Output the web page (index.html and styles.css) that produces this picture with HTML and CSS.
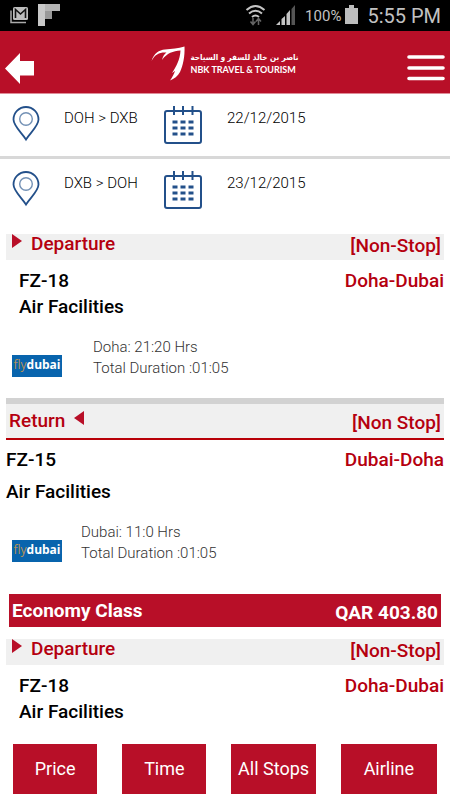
FILE: index.html
```html
<!DOCTYPE html>
<html lang="en">
<head>
<meta charset="utf-8">
<meta name="viewport" content="width=device-width, initial-scale=1">
<title>NBK Travel &amp; Tourism</title>
<link rel="stylesheet" href="styles.css">
</head>
<body>
<svg class="defs" aria-hidden="true">
  <symbol id="pin" viewBox="0 0 28 36">
    <path d="M14 33.5C10 27 1.500 20 1.500 13.500A12.500 12.500 0 0 1 26.500 13.500C26.500 20 18 27 14 33.500Z" fill="none" stroke="#23508a" stroke-width="1.800"/>
    <circle cx="14" cy="13" r="6.300" fill="none" stroke="#7391b5" stroke-width="1.400"/>
  </symbol>
  <symbol id="calendar" viewBox="0 0 38 38">
    <rect x="1" y="5" width="36" height="32" rx="2" fill="none" stroke="#23508a" stroke-width="2"/>
    <path d="M10 0v9M19 0v9M28.500 0v9" stroke="#23508a" stroke-width="2"/>
    <path d="M8.500 16h5M16.500 16h5M24.500 16h5M8.500 22h5M16.500 22h5M24.500 22h5M8.500 28h5M16.500 28h5M24.500 28h5" stroke="#23508a" stroke-width="3"/>
  </symbol>
</svg>

<div class="status">
  <svg width="60" height="31" viewBox="0 0 60 31" aria-hidden="true">
    <path d="M11 10.500V22.500H26" fill="none" stroke="#aaa" stroke-width="1.500"/>
    <rect x="13" y="7" width="15" height="13" rx="1.500" fill="#bdbdbd"/>
    <path d="M15.500 18V9.500L20.500 14L25.500 9.500V18" fill="none" stroke="#111" stroke-width="1.600"/>
    <path d="M38 4h7v22h-7z" fill="#c8c8c8"/>
    <path d="M45 4h15v7H45z" fill="#b4b4b4"/>
    <path d="M45 11h7v8h-7z" fill="#999"/>
  </svg>
  <div class="status-right">
    <svg width="54" height="31" viewBox="0 0 54 31" aria-hidden="true">
      <g fill="none" stroke="#c4c4c4" stroke-width="2">
        <path d="M1.500 10Q10.500 2 19.500 10"/>
        <path d="M4 13.500Q10.500 8 17 13.500"/>
        <path d="M7 17Q10.500 14 14 17"/>
      </g>
      <path d="M8 18v6M5.500 21.500L8 24.500L10.500 21.500M13.500 25v-6M11 21.500L13.500 18.500L16 21.500" fill="none" stroke="#666" stroke-width="1.500"/>
      <path d="M31 25L35 21V25ZM36.500 25V19L40 16V25ZM41.500 25V14L45 10V25Z" fill="#c4c4c4"/>
      <path d="M46.500 25V9L50 5V25Z" fill="#555"/>
    </svg>
    <span class="battery-text">100%</span>
    <svg width="13" height="31" viewBox="0 0 13 31" aria-hidden="true"><path d="M4 5h5v3h4v16H0V8h4z" fill="#bdbdbd"/></svg>
    <span class="clock">5:55 PM</span>
  </div>
</div>

<header class="header">
  <button class="icon-button" type="button" aria-label="Back">
    <svg width="29" height="31" viewBox="0 0 29 31"><path d="M0 15.500L15 0V8H29V22.500H15V31Z" fill="#fff"/></svg>
  </button>
  <div class="brand">
    <svg width="34" height="36" viewBox="0 0 34 36" aria-hidden="true">
      <path d="M0.500 15C3 7 8 4 14 3.500C21 3 27 2.500 33.500 0.500C34 10 32 20 29 26C27 30 23 33 19 34.500C21.500 31 23 28 24 25L21 27C25 21 29 14 29.500 4.500C22 5 16 7 11 14C12 10 13.500 8 15.500 6.500C9 6 4 8 0.500 15Z" fill="#fff"/>
    </svg>
    <div class="brand-text">
      <span class="brand-ar" lang="ar" dir="rtl">ناصر بن خالد للسفر و السياحة</span>
      <span class="brand-en">NBK TRAVEL &amp; TOURISM</span>
    </div>
  </div>
  <button class="icon-button" type="button" aria-label="Menu">
    <svg width="38" height="26" viewBox="0 0 38 26"><path d="M2 2H36M2 13H36M2 23.500H36" stroke="#fff" stroke-width="3.600" stroke-linecap="round"/></svg>
  </button>
</header>

<main>
  <section class="legs">
    <div class="leg">
      <svg width="28" height="36" aria-hidden="true"><use href="#pin"/></svg>
      <span class="route">DOH &gt; DXB</span>
      <svg width="38" height="38" aria-hidden="true"><use href="#calendar"/></svg>
      <span>22/12/2015</span>
    </div>
    <div class="leg">
      <svg width="28" height="36" aria-hidden="true"><use href="#pin"/></svg>
      <span class="route">DXB &gt; DOH</span>
      <svg width="38" height="38" aria-hidden="true"><use href="#calendar"/></svg>
      <span>23/12/2015</span>
    </div>
  </section>

  <section class="flight">
    <h2 class="bar"><svg width="10" height="14" viewBox="0 0 10 14" aria-hidden="true"><path d="M0 0L10 7L0 14Z" fill="#b80f28"/></svg>Departure<span class="stops">[Non-Stop]</span></h2>
    <div class="info">
      <div class="line"><span>FZ-18</span><span class="city">Doha-Dubai</span></div>
      <div class="line"><span>Air Facilities</span></div>
    </div>
    <div class="times">
      <div class="airline"><i>fly</i>dubai</div>
      <p>Doha: 21:20 Hrs<br>Total Duration :01:05</p>
    </div>
  </section>

  <section class="flight return">
    <h2 class="bar">Return<svg width="10" height="14" viewBox="0 0 10 14" aria-hidden="true"><path d="M10 0L0 7L10 14Z" fill="#b80f28"/></svg><span class="stops">[Non Stop]</span></h2>
    <div class="info">
      <div class="line"><span>FZ-15</span><span class="city">Dubai-Doha</span></div>
      <div class="line"><span>Air Facilities</span></div>
    </div>
    <div class="times">
      <div class="airline"><i>fly</i>dubai</div>
      <p>Dubai: 11:0 Hrs<br>Total Duration :01:05</p>
    </div>
  </section>

  <div class="fare"><span>Economy Class</span><span class="price">QAR 403.80</span></div>

  <section class="flight">
    <h2 class="bar"><svg width="10" height="14" viewBox="0 0 10 14" aria-hidden="true"><path d="M0 0L10 7L0 14Z" fill="#b80f28"/></svg>Departure<span class="stops">[Non-Stop]</span></h2>
    <div class="info">
      <div class="line"><span>FZ-18</span><span class="city">Doha-Dubai</span></div>
      <div class="line"><span>Air Facilities</span></div>
    </div>
  </section>
</main>

<nav class="filters" aria-label="Sort and filter">
  <button type="button">Price</button>
  <button type="button">Time</button>
  <button type="button">All Stops</button>
  <button type="button">Airline</button>
</nav>
</body>
</html>
```
FILE: styles.css
```css
* {
  box-sizing: border-box;
}

body {
  margin: 0;
  background: #fff;
  color: #000;
  font: 15px/20px Roboto, sans-serif;
}

button {
  padding: 0;
  border: 0;
  font: inherit;
}

h2,
p {
  margin: 0;
  font: inherit;
}

svg {
  display: block;
  flex: none;
}

.defs {
  display: none;
}

.status {
  display: flex;
  justify-content: space-between;
  background: #000;
  color: #c2c2c2;
}

.status-right {
  display: flex;
  align-items: center;
  padding-right: 9px;
}

.battery-text {
  margin: 0 4px 0 6px;
}

.clock {
  margin-left: 9px;
  font-size: 20px;
}

.header {
  display: flex;
  align-items: center;
  justify-content: space-between;
  height: 63px;
  padding: 12px 5px 0;
  background: #b80f28;
  border-bottom: 1px solid #e08c98;
}

.icon-button {
  width: 38px;
  background: none;
}

.brand {
  display: flex;
  align-items: center;
  gap: 5px;
  padding-bottom: 9px;
  color: #fff;
  white-space: nowrap;
}

.brand-text {
  display: flex;
  flex-direction: column;
}

.brand-ar {
  font: bold 8px/12px "DejaVu Sans Condensed", "DejaVu Sans", sans-serif;
}

.brand-en {
  font: bold 9px/12px Lato, sans-serif;
}

.leg {
  display: flex;
  align-items: flex-start;
  height: 62px;
  padding: 12px 12px 0;
}

.leg + .leg {
  height: 78px;
  border-top: 3px solid #d8d8d8;
}

.leg span {
  margin-left: 25px;
  padding-top: 2px;
  font-weight: 300;
}

.leg .route {
  width: 100px;
  margin-left: 24px;
}

.flight {
  padding: 0 6px;
  font-size: 19px;
  font-weight: 500;
}

.bar {
  display: flex;
  height: 26px;
  padding: 0 3px 0 6px;
  gap: 9px;
  background: #f0f0f0;
  color: #b5000f;
}

.stops {
  margin: 2px 0 0 auto;
}

.info {
  padding: 8px 0 0 13px;
}

.line {
  display: flex;
  justify-content: space-between;
  line-height: 26px;
}

.city {
  color: #b5000f;
}

.times {
  display: flex;
  align-items: center;
  gap: 31px;
  padding: 17px 6px 19px;
  color: #333;
  font-size: 15px;
  font-weight: 300;
  line-height: 21px;
}

.airline {
  width: 50px;
  height: 22px;
  margin-top: 16px;
  background: #0864ad;
  color: #fff;
  font: bold 12px/20px "Open Sans", sans-serif;
  text-align: center;
  overflow: hidden;
}

.airline i {
  color: #b59258;
  font-style: normal;
  font-weight: 400;
}

.return .bar {
  height: 42px;
  padding: 7px 3px 0;
  border-top: 6px solid #d2d2d2;
  border-bottom: 2px solid #b80008;
}

.return .info {
  padding: 4px 0 0;
}

.return .line {
  line-height: 32px;
}

.return .times {
  gap: 19px;
  padding: 14px 6px 30px;
}

.fare {
  display: flex;
  justify-content: space-between;
  height: 33px;
  margin: 0 9px 12px;
  padding: 7px 3px 0;
  background: #b80f28;
  color: #fff;
  font-size: 19px;
  font-weight: 700;
}

.price {
  margin-top: 2px;
}

.filters {
  display: grid;
  grid-template-columns: 84fr 84fr 84fr 96fr;
  gap: 25px;
  padding: 19px 13px 6px;
}

.filters button {
  height: 50px;
  background: #b80f28;
  color: #fff;
  font-size: 18px;
  white-space: nowrap;
}
```
